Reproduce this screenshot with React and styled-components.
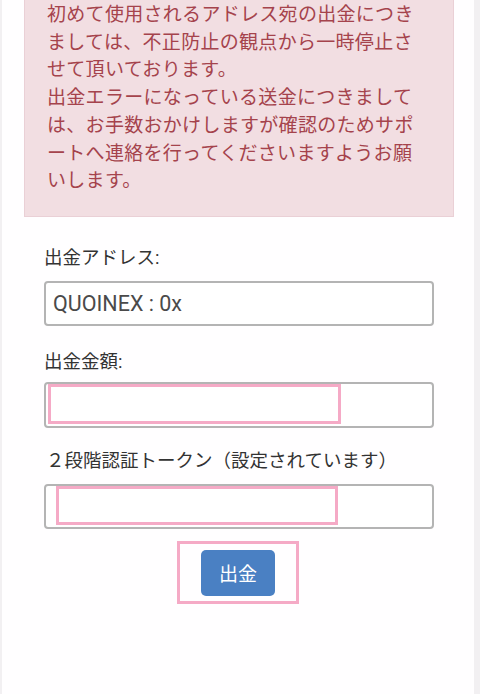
import React from 'react';
import styled, { createGlobalStyle } from 'styled-components';

const GlobalStyle = createGlobalStyle`
  html, body {
    margin: 0;
    padding: 0;
    background: #f2f0f2;
  }
  body {
    font-family: Roboto, "Noto Sans CJK JP", sans-serif;
  }
`;

const Page = styled.div`
  margin: 0 6px 0 2px;
  min-height: 694px;
  background: #fffeff;
  padding: 0 20px 0 22px;
  box-sizing: border-box;
`;

const Alert = styled.div`
  background: #f2dee2;
  border: 1px solid #ead0d6;
  border-top: none;
  color: #a5434c;
  font-size: 19px;
  letter-spacing: 0.3px;
  line-height: 27.7px;
  padding: 1px 10px 21px 22px;
  white-space: nowrap;
`;

const Form = styled.form`
  display: flex;
  flex-direction: column;
  padding: 29px 20px 0 20px;
`;

const Label = styled.label`
  display: block;
  color: #333;
  font-size: 18.5px;
  line-height: 24px;
  margin: ${({ $top }) => $top || 0}px 0 ${({ $bottom }) => $bottom || 10}px
    ${({ $indent }) => $indent || 0}px;
`;

const Field = styled.div`
  position: relative;
  height: ${({ $height }) => $height || 45}px;
`;

const Input = styled.input`
  box-sizing: border-box;
  width: 100%;
  height: 100%;
  border: 2px solid #b4b4b4;
  border-radius: 4px;
  padding: 0 7px;
  font-family: Roboto, "Noto Sans CJK JP", sans-serif;
  font-size: 21.5px;
  color: #4a4a4a;
  background: #fff;
  outline: none;
`;

const Mark = styled.div`
  position: absolute;
  box-sizing: border-box;
  border: 3px solid #f5aac6;
  pointer-events: none;
`;

const Actions = styled.div`
  display: flex;
  justify-content: center;
  margin-top: 12px;
`;

const ButtonFrame = styled.div`
  border: 3px solid #f5aac6;
  padding: 6px 21px 5px 21px;
  margin-right: 2px;
`;

const Button = styled.button`
  width: 74px;
  height: 46px;
  border: none;
  border-radius: 5px;
  background: #4a80c3;
  color: #fff;
  font-family: "Noto Sans CJK JP", sans-serif;
  font-size: 19px;
  cursor: pointer;
`;

export default function App() {
  return (
    <>
      <GlobalStyle />
      <Page>
        <Alert>
          初めて使用されるアドレス宛の出金につき
          <br />
          ましては、不正防止の観点から一時停止さ
          <br />
          せて頂いております。
          <br />
          出金エラーになっている送金につきまして
          <br />
          は、お手数おかけしますが確認のためサポ
          <br />
          ートへ連絡を行ってくださいますようお願
          <br />
          いします。
        </Alert>
        <Form onSubmit={(e) => e.preventDefault()}>
          <Label htmlFor="address" $bottom={11}>出金アドレス:</Label>
          <Field>
            <Input id="address" defaultValue="QUOINEX : 0x" />
          </Field>
          <Label htmlFor="amount" $top={24} $bottom={8}>出金金額:</Label>
          <Field $height={46}>
            <Input id="amount" />
            <Mark style={{ left: 4, top: 2, width: 293, height: 40 }} />
          </Field>
          <Label htmlFor="token" $top={21} $bottom={11} $indent={2}>
            ２段階認証トークン（設定されています）
          </Label>
          <Field>
            <Input id="token" />
            <Mark style={{ left: 12, top: 2, width: 282, height: 39 }} />
          </Field>
          <Actions>
            <ButtonFrame>
              <Button type="submit">出金</Button>
            </ButtonFrame>
          </Actions>
        </Form>
      </Page>
    </>
  );
}
